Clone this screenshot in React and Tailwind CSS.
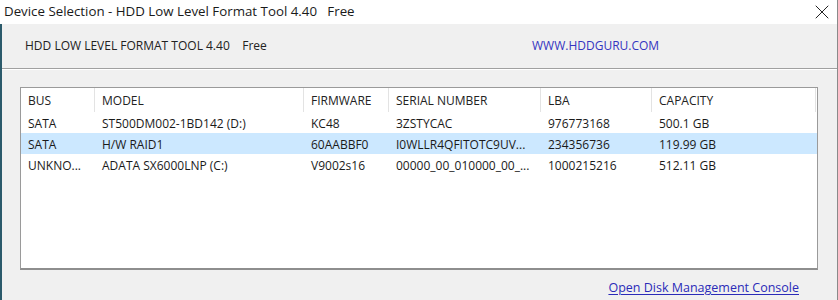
import { X } from 'lucide-react';

const cols = 'grid grid-cols-[74px_209px_85px_152px_111px_164px]';

const headers = ['BUS', 'MODEL', 'FIRMWARE', 'SERIAL NUMBER', 'LBA', 'CAPACITY'];

const drives = [
  ['SATA', 'ST500DM002-1BD142 (D:)', 'KC48', '3ZSTYCAC', '976773168', '500.1 GB'],
  ['SATA', 'H/W RAID1', '60AABBF0', 'I0WLLR4QFITOTC9UV...', '234356736', '119.99 GB'],
  ['UNKNO...', 'ADATA SX6000LNP (C:)', 'V9002s16', '00000_00_010000_00_...', '1000215216', '512.11 GB'],
];

export default function App() {
  return (
    <div className="w-[838px] h-[300px] flex flex-col overflow-hidden font-['Open_Sans','Noto_Sans',sans-serif] text-[12px] text-[#1a1a1a] border-r border-[#8a8a8a]">
      {/* Title bar */}
      <div className="h-[24px] shrink-0 bg-white flex items-center pl-[4px] pr-[3px]">
        <span className="whitespace-pre text-[13.3px]">Device Selection - HDD Low Level Format Tool 4.40   Free</span>
        <X className="ml-auto w-[24px] h-[24px] text-[#222]" strokeWidth={1} />
      </div>

      <div className="flex-1 flex flex-col bg-[#f0f0f0] border-l-2 border-[#2b5a6b]">
        {/* Header strip */}
        <div className="h-[45px] shrink-0 flex items-center pl-[23px] border-b border-[#a0a0a0]">
          <span className="w-[507px] whitespace-pre text-[12px] text-[#222]">HDD LOW LEVEL FORMAT TOOL 4.40    Free</span>
          <span className="text-[12px] text-[#3535c0]">WWW.HDDGURU.COM</span>
        </div>
        <div className="h-px bg-white" />

        {/* Device list */}
        <div className="pt-[17px] pl-[18px]">
          <div className="w-[798px] h-[183px] bg-white border border-[#9a9a9a] border-b-2 border-b-[#8e8e8e]">
            <div className={`${cols} h-[24px]`}>
              {headers.map((h) => (
                <div key={h} className="flex items-center pl-[7px] pt-[2px] border-r border-[#e3e3e3] text-[#222]">
                  {h}
                </div>
              ))}
            </div>
            {drives.map((row, i) => (
              <div key={i} className={`${cols} h-[21px] ${i === 1 ? 'bg-[#cce8ff]' : ''}`}>
                {row.map((cell, j) => (
                  <div key={j} className="flex items-center pl-[7px] pt-[2px] whitespace-nowrap overflow-hidden">
                    {cell}
                  </div>
                ))}
              </div>
            ))}
          </div>
        </div>

        {/* Footer */}
        <div className="flex justify-end pt-[9px] pr-[38px]">
          <a href="#" className="text-[12.5px] text-[#2b2bb8] underline underline-offset-2">
            Open Disk Management Console
          </a>
        </div>
      </div>
    </div>
  );
}
